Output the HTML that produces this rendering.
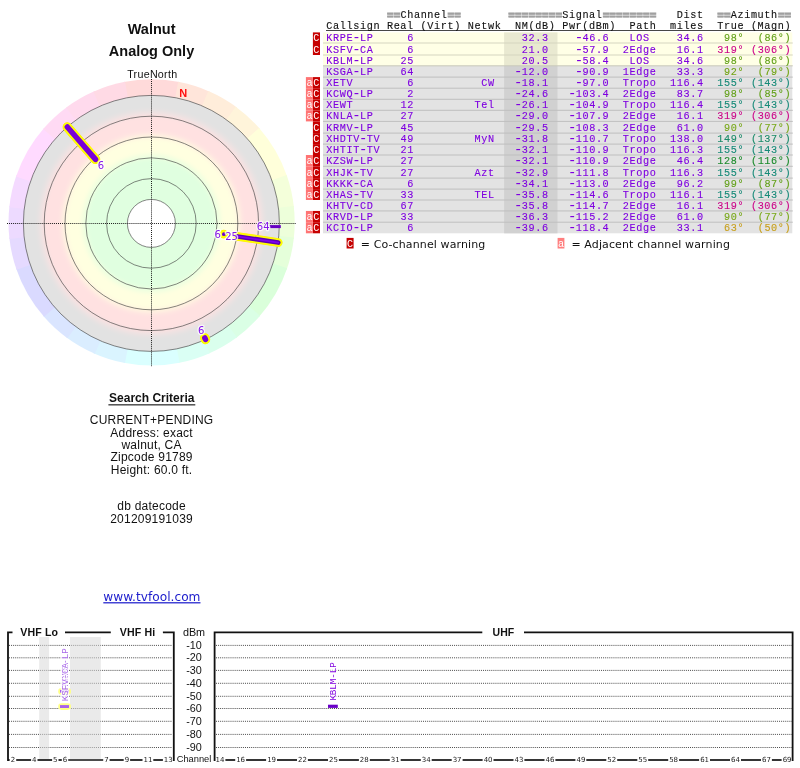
<!DOCTYPE html>
<html lang="en"><head><meta charset="utf-8"><title>TV Fool Radar Plot - Walnut - Analog Only</title>
<style>html,body{margin:0;padding:0;background:#fff}body{width:800px;height:768px;overflow:hidden}svg{display:block;will-change:transform}text{white-space:pre}.m{font-family:"Liberation Mono", "DejaVu Sans Mono", monospace;font-size:10.2px;letter-spacing:0.62px}.s{font-family:"Liberation Sans", "DejaVu Sans", sans-serif}.v{font-family:"DejaVu Sans", "Liberation Sans", sans-serif}</style></head><body>
<svg width="800" height="768" viewBox="0 0 800 768">
<rect width="800" height="768" fill="#fff"/>
<g id="huering">
<path d="M151.60 222.40 L123.56 82.07 A143.10 143.10 0 0 1 179.64 82.07 Z" fill="#ffdada"/>
<path d="M151.60 222.40 L178.17 81.79 A143.10 143.10 0 0 1 209.74 91.64 Z" fill="#ffe5da"/>
<path d="M151.60 222.40 L208.36 91.04 A143.10 143.10 0 0 1 236.98 107.56 Z" fill="#ffedda"/>
<path d="M151.60 222.40 L235.77 106.67 A143.10 143.10 0 0 1 260.09 129.08 Z" fill="#fff4da"/>
<path d="M151.60 222.40 L259.11 127.95 A143.10 143.10 0 0 1 287.15 176.52 Z" fill="#ffffda"/>
<path d="M151.60 222.40 L286.66 175.10 A143.10 143.10 0 0 1 293.91 207.37 Z" fill="#f4ffda"/>
<path d="M151.60 222.40 L293.74 205.88 A143.10 143.10 0 0 1 293.74 238.92 Z" fill="#edffda"/>
<path d="M151.60 222.40 L293.91 237.43 A143.10 143.10 0 0 1 286.66 269.70 Z" fill="#e5ffda"/>
<path d="M151.60 222.40 L287.15 268.28 A143.10 143.10 0 0 1 259.11 316.85 Z" fill="#daffda"/>
<path d="M151.60 222.40 L260.09 315.72 A143.10 143.10 0 0 1 235.77 338.13 Z" fill="#daffe5"/>
<path d="M151.60 222.40 L236.98 337.24 A143.10 143.10 0 0 1 208.36 353.76 Z" fill="#daffed"/>
<path d="M151.60 222.40 L209.74 353.16 A143.10 143.10 0 0 1 178.17 363.01 Z" fill="#dafff4"/>
<path d="M151.60 222.40 L179.64 362.73 A143.10 143.10 0 0 1 123.56 362.73 Z" fill="#daffff"/>
<path d="M151.60 222.40 L125.03 363.01 A143.10 143.10 0 0 1 93.46 353.16 Z" fill="#daf4ff"/>
<path d="M151.60 222.40 L94.84 353.76 A143.10 143.10 0 0 1 66.22 337.24 Z" fill="#daedff"/>
<path d="M151.60 222.40 L67.43 338.13 A143.10 143.10 0 0 1 43.11 315.72 Z" fill="#dae5ff"/>
<path d="M151.60 222.40 L44.09 316.85 A143.10 143.10 0 0 1 16.05 268.28 Z" fill="#dadaff"/>
<path d="M151.60 222.40 L16.54 269.70 A143.10 143.10 0 0 1 9.29 237.43 Z" fill="#e5daff"/>
<path d="M151.60 222.40 L9.46 238.92 A143.10 143.10 0 0 1 9.46 205.88 Z" fill="#eddaff"/>
<path d="M151.60 222.40 L9.29 207.37 A143.10 143.10 0 0 1 16.54 175.10 Z" fill="#f4daff"/>
<path d="M151.60 222.40 L16.05 176.52 A143.10 143.10 0 0 1 44.09 127.95 Z" fill="#ffdaff"/>
<path d="M151.60 222.40 L43.11 129.08 A143.10 143.10 0 0 1 67.43 106.67 Z" fill="#ffdaf4"/>
<path d="M151.60 222.40 L66.22 107.56 A143.10 143.10 0 0 1 94.84 91.04 Z" fill="#ffdaed"/>
<path d="M151.60 222.40 L93.46 91.64 A143.10 143.10 0 0 1 125.03 81.79 Z" fill="#ffdae5"/>
</g>
<defs><radialGradient id="zones" gradientUnits="userSpaceOnUse" cx="151.4" cy="223.4" r="128.0">
<stop offset="0.0000" stop-color="#ffffff"/>
<stop offset="0.1875" stop-color="#ffffff"/>
<stop offset="0.1876" stop-color="#e0ffe0"/>
<stop offset="0.4695" stop-color="#e0ffe0"/>
<stop offset="0.4805" stop-color="#e1ffe0"/>
<stop offset="0.4914" stop-color="#e3ffe0"/>
<stop offset="0.5023" stop-color="#e7ffe0"/>
<stop offset="0.5133" stop-color="#ebffe0"/>
<stop offset="0.5242" stop-color="#f0ffe0"/>
<stop offset="0.5352" stop-color="#f4ffe0"/>
<stop offset="0.5461" stop-color="#f8ffe0"/>
<stop offset="0.5570" stop-color="#fcffe0"/>
<stop offset="0.5680" stop-color="#feffe0"/>
<stop offset="0.5789" stop-color="#ffffe0"/>
<stop offset="0.6320" stop-color="#ffffe0"/>
<stop offset="0.6430" stop-color="#fffee0"/>
<stop offset="0.6539" stop-color="#fffce0"/>
<stop offset="0.6648" stop-color="#fff9e0"/>
<stop offset="0.6758" stop-color="#fff4e0"/>
<stop offset="0.6867" stop-color="#fff0e0"/>
<stop offset="0.6977" stop-color="#ffece1"/>
<stop offset="0.7086" stop-color="#ffe7e1"/>
<stop offset="0.7195" stop-color="#ffe4e1"/>
<stop offset="0.7305" stop-color="#ffe2e1"/>
<stop offset="0.7414" stop-color="#ffe1e1"/>
<stop offset="0.8063" stop-color="#ffe1e1"/>
<stop offset="0.8172" stop-color="#fee1e1"/>
<stop offset="0.8281" stop-color="#fce1e1"/>
<stop offset="0.8391" stop-color="#f9e1e1"/>
<stop offset="0.8500" stop-color="#f5e1e1"/>
<stop offset="0.8609" stop-color="#f0e2e2"/>
<stop offset="0.8719" stop-color="#ece2e2"/>
<stop offset="0.8828" stop-color="#e8e2e2"/>
<stop offset="0.8938" stop-color="#e5e2e2"/>
<stop offset="0.9047" stop-color="#e3e2e2"/>
<stop offset="0.9156" stop-color="#e2e2e2"/>
<stop offset="1.0000" stop-color="#e2e2e2"/>
</radialGradient></defs>
<circle cx="151.4" cy="223.4" r="128.0" fill="url(#zones)"/>
<circle cx="151.4" cy="223.4" r="128.0" fill="none" stroke="#3a3a3a" stroke-width="0.62"/>
<circle cx="151.4" cy="223.4" r="107.2" fill="none" stroke="#3a3a3a" stroke-width="0.62"/>
<circle cx="151.4" cy="223.4" r="86.4" fill="none" stroke="#3a3a3a" stroke-width="0.62"/>
<circle cx="151.4" cy="223.4" r="65.6" fill="none" stroke="#3a3a3a" stroke-width="0.62"/>
<circle cx="151.4" cy="223.4" r="44.8" fill="none" stroke="#3a3a3a" stroke-width="0.62"/>
<circle cx="151.4" cy="223.4" r="24.0" fill="none" stroke="#3a3a3a" stroke-width="0.62"/>
<path d="M7 223.5 H296" stroke="#1a1a1a" stroke-width="1" stroke-dasharray="1 1.04" fill="none"/>
<path d="M151.5 79 V366.8" stroke="#1a1a1a" stroke-width="1" stroke-dasharray="1 1.04" fill="none"/>
<text class="s" x="183.3" y="96.6" font-size="11" font-weight="bold" fill="#ff1010" text-anchor="middle">N</text>
<circle cx="223.75" cy="234.1" r="4.3" fill="#ffee00"/><circle cx="223.75" cy="234.1" r="3.9" fill="#ffff00"/>
<circle cx="223.9" cy="234.2" r="1.9" fill="#6a00cc"/>
<path d="M204.82 337.96 L205.50 339.41" stroke="#ffee00" stroke-width="9.5" stroke-linecap="round"/><path d="M204.82 337.96 L205.50 339.41" stroke="#ffff00" stroke-width="8.7" stroke-linecap="round"/><path d="M204.82 337.96 L205.50 339.41" stroke="#7800d8" stroke-width="5.5" stroke-linecap="round"/>
<path d="M95.52 159.35 L67.32 127.02" stroke="#ffee00" stroke-width="9.5" stroke-linecap="round"/><path d="M95.52 159.35 L67.32 127.02" stroke="#ffff00" stroke-width="8.7" stroke-linecap="round"/><path d="M95.52 159.35 L67.32 127.02" stroke="#7800d8" stroke-width="5.5" stroke-linecap="round"/>
<rect x="269.8" y="225.1" width="11" height="3" fill="#6600c4"/>
<text class="v" x="217.8" y="237.6" font-size="10" text-anchor="middle" fill="#8618ea" stroke="#fff" stroke-opacity="0.75" stroke-width="2.6" stroke-linejoin="round" paint-order="stroke">6</text>
<path d="M237.42 236.41 L278.26 242.59" stroke="#ffee00" stroke-width="8.6" stroke-linecap="round"/><path d="M237.42 236.41 L278.26 242.59" stroke="#ffff00" stroke-width="7.8" stroke-linecap="round"/><path d="M237.42 236.41 L278.26 242.59" stroke="#5a00b0" stroke-width="4.6" stroke-linecap="round"/><path d="M237.42 236.41 L278.26 242.59" stroke="#8000f0" stroke-width="1.6" stroke-linecap="round"/>
<text class="v" x="231.5" y="239.6" font-size="10" text-anchor="middle" fill="#8618ea" stroke="#fff" stroke-opacity="0.75" stroke-width="2.6" stroke-linejoin="round" paint-order="stroke">25</text>
<text class="v" x="263.2" y="230.2" font-size="10" text-anchor="middle" fill="#8618ea" stroke="#fff" stroke-opacity="0.75" stroke-width="2.6" stroke-linejoin="round" paint-order="stroke">64</text>
<text class="v" x="101.0" y="168.6" font-size="10" text-anchor="middle" fill="#8618ea" stroke="#fff" stroke-opacity="0.75" stroke-width="2.6" stroke-linejoin="round" paint-order="stroke">6</text>
<text class="v" x="201.1" y="334.2" font-size="10" text-anchor="middle" fill="#8618ea" stroke="#fff" stroke-opacity="0.75" stroke-width="2.6" stroke-linejoin="round" paint-order="stroke">6</text>
<text class="s" x="151.6" y="34" font-size="14.5" font-weight="bold" text-anchor="middle" fill="#111">Walnut</text>
<text class="s" x="151.5" y="56.0" font-size="14.5" font-weight="bold" text-anchor="middle" fill="#111">Analog Only</text>
<text class="s" x="152.3" y="77.5" font-size="10.7" letter-spacing="0.27" text-anchor="middle" fill="#111">TrueNorth</text>
<text class="s" x="151.8" y="401.9" font-size="12" font-weight="bold" text-anchor="middle" fill="#111">Search Criteria</text>
<rect x="108.4" y="404.3" width="86.9" height="1.1" fill="#111"/>
<text class="s" x="151.6" y="423.7" font-size="12" letter-spacing="0.22" text-anchor="middle" fill="#111">CURRENT+PENDING</text>
<text class="s" x="151.6" y="437.2" font-size="12" letter-spacing="0.22" text-anchor="middle" fill="#111">Address: exact</text>
<text class="s" x="151.6" y="449.4" font-size="12" letter-spacing="0.22" text-anchor="middle" fill="#111">walnut, CA</text>
<text class="s" x="151.6" y="461.3" font-size="12" letter-spacing="0.22" text-anchor="middle" fill="#111">Zipcode 91789</text>
<text class="s" x="151.6" y="473.7" font-size="12" letter-spacing="0.22" text-anchor="middle" fill="#111">Height: 60.0 ft.</text>
<text class="s" x="151.6" y="509.7" font-size="12" letter-spacing="0.22" text-anchor="middle" fill="#111">db datecode</text>
<text class="s" x="151.6" y="523.0" font-size="12" letter-spacing="0.22" text-anchor="middle" fill="#111">201209191039</text>
<text class="v" x="151.9" y="601.2" font-size="12.2" text-anchor="middle" fill="#1c1ccc" text-decoration="underline">www.tvfool.com</text>
<rect x="323.0" y="32.40" width="469.3" height="33.40" fill="#ffffe6"/>
<rect x="323.0" y="65.80" width="469.3" height="167.50" fill="#e3e3e3"/>
<rect x="504.1" y="32.40" width="53.4" height="33.40" fill="#e9e9d1"/>
<rect x="504.1" y="65.80" width="53.4" height="167.50" fill="#d1d1d1"/>
<rect x="323.0" y="42.50" width="469.8" height="1" fill="#d6d6c0"/>
<rect x="323.0" y="54.50" width="469.8" height="1" fill="#d6d6c0"/>
<rect x="323.0" y="65.30" width="469.8" height="1" fill="#c8c8b8"/>
<rect x="323.0" y="76.60" width="469.8" height="1" fill="#bfbfbf"/>
<rect x="323.0" y="87.70" width="469.8" height="1" fill="#bfbfbf"/>
<rect x="323.0" y="98.80" width="469.8" height="1" fill="#bfbfbf"/>
<rect x="323.0" y="109.80" width="469.8" height="1" fill="#bfbfbf"/>
<rect x="323.0" y="120.90" width="469.8" height="1" fill="#bfbfbf"/>
<rect x="323.0" y="132.60" width="469.8" height="1" fill="#bfbfbf"/>
<rect x="323.0" y="143.60" width="469.8" height="1" fill="#bfbfbf"/>
<rect x="323.0" y="154.50" width="469.8" height="1" fill="#bfbfbf"/>
<rect x="323.0" y="165.80" width="469.8" height="1" fill="#bfbfbf"/>
<rect x="323.0" y="177.60" width="469.8" height="1" fill="#bfbfbf"/>
<rect x="323.0" y="188.60" width="469.8" height="1" fill="#bfbfbf"/>
<rect x="323.0" y="199.50" width="469.8" height="1" fill="#bfbfbf"/>
<rect x="323.0" y="210.45" width="469.8" height="1" fill="#bfbfbf"/>
<rect x="323.0" y="221.70" width="469.8" height="1" fill="#bfbfbf"/>
<rect x="326" y="30.1" width="464.8" height="0.9" fill="#333"/>
<text class="m" x="386.96" y="19.00" fill="#a0a0a0" stroke="#a0a0a0" stroke-width="0.85" font-weight="bold" style="font-size:11px;letter-spacing:0.14px">==</text>
<text class="m" x="400.44" y="17.50" fill="#111" stroke="#111" stroke-width="0.12">Channel</text>
<text class="m" x="447.62" y="19.00" fill="#a0a0a0" stroke="#a0a0a0" stroke-width="0.85" font-weight="bold" style="font-size:11px;letter-spacing:0.14px">==</text>
<text class="m" x="508.28" y="19.00" fill="#a0a0a0" stroke="#a0a0a0" stroke-width="0.85" font-weight="bold" style="font-size:11px;letter-spacing:0.14px">========</text>
<text class="m" x="562.20" y="17.50" fill="#111" stroke="#111" stroke-width="0.12">Signal</text>
<text class="m" x="602.64" y="19.00" fill="#a0a0a0" stroke="#a0a0a0" stroke-width="0.85" font-weight="bold" style="font-size:11px;letter-spacing:0.14px">========</text>
<text class="m" x="676.78" y="17.50" fill="#111" stroke="#111" stroke-width="0.12">Dist</text>
<text class="m" x="717.22" y="19.00" fill="#a0a0a0" stroke="#a0a0a0" stroke-width="0.85" font-weight="bold" style="font-size:11px;letter-spacing:0.14px">==</text>
<text class="m" x="730.70" y="17.50" fill="#111" stroke="#111" stroke-width="0.12">Azimuth</text>
<text class="m" x="777.88" y="19.00" fill="#a0a0a0" stroke="#a0a0a0" stroke-width="0.85" font-weight="bold" style="font-size:11px;letter-spacing:0.14px">==</text>
<text class="m" x="326.30" y="29.00" fill="#111" stroke="#111" stroke-width="0.12">Callsign Real (Virt)</text>
<text class="m" x="467.84" y="29.00" fill="#111" stroke="#111" stroke-width="0.12">Netwk</text>
<text class="m" x="515.02" y="29.00" fill="#111" stroke="#111" stroke-width="0.12">NM(dB) Pwr(dBm)</text>
<text class="m" x="629.60" y="29.00" fill="#111" stroke="#111" stroke-width="0.12">Path</text>
<text class="m" x="670.04" y="29.00" fill="#111" stroke="#111" stroke-width="0.12">miles</text>
<text class="m" x="717.22" y="29.00" fill="#111" stroke="#111" stroke-width="0.12">True (Magn)</text>
<rect x="312.9" y="32.40" width="7.1" height="10.60" fill="#c60000"/>
<text class="m" x="313.3" y="40.80" fill="#fff" style="letter-spacing:0">C</text>
<text class="m" x="326.30" y="40.80" fill="#7f00e0" stroke="#7f00e0" stroke-width="0.12">KRPE<tspan dx="-0.95" dy="1.05" style="font-size:14px;letter-spacing:-1.66px" stroke-width="0">-</tspan><tspan dx="0.95" dy="-1.05">LP</tspan></text>
<text class="m" x="407.18" y="40.80" fill="#7f00e0" stroke="#7f00e0" stroke-width="0.12">6</text>
<text class="m" x="521.76" y="40.80" fill="#7f00e0" stroke="#7f00e0" stroke-width="0.12">32.3</text>
<text class="m" x="575.68" y="40.80" fill="#7f00e0" stroke="#7f00e0" stroke-width="0.12"><tspan dx="-0.95" dy="1.05" style="font-size:14px;letter-spacing:-1.66px" stroke-width="0">-</tspan><tspan dx="0.95" dy="-1.05">46.6</tspan></text>
<text class="m" x="629.60" y="40.80" fill="#7f00e0" stroke="#7f00e0" stroke-width="0.12">LOS</text>
<text class="m" x="676.78" y="40.80" fill="#7f00e0" stroke="#7f00e0" stroke-width="0.12">34.6</text>
<text class="m" x="723.96" y="40.80" fill="#62a018" stroke="#62a018" stroke-width="0.12">98°</text>
<text class="m" x="757.66" y="40.80" fill="#62a018" stroke="#62a018" stroke-width="0.12">(86°)</text>
<rect x="312.9" y="43.00" width="7.1" height="12.00" fill="#c60000"/>
<text class="m" x="313.3" y="52.80" fill="#fff" style="letter-spacing:0">C</text>
<text class="m" x="326.30" y="52.80" fill="#7f00e0" stroke="#7f00e0" stroke-width="0.12">KSFV<tspan dx="-0.95" dy="1.05" style="font-size:14px;letter-spacing:-1.66px" stroke-width="0">-</tspan><tspan dx="0.95" dy="-1.05">CA</tspan></text>
<text class="m" x="407.18" y="52.80" fill="#7f00e0" stroke="#7f00e0" stroke-width="0.12">6</text>
<text class="m" x="521.76" y="52.80" fill="#7f00e0" stroke="#7f00e0" stroke-width="0.12">21.0</text>
<text class="m" x="575.68" y="52.80" fill="#7f00e0" stroke="#7f00e0" stroke-width="0.12"><tspan dx="-0.95" dy="1.05" style="font-size:14px;letter-spacing:-1.66px" stroke-width="0">-</tspan><tspan dx="0.95" dy="-1.05">57.9</tspan></text>
<text class="m" x="622.86" y="52.80" fill="#7f00e0" stroke="#7f00e0" stroke-width="0.12">2Edge</text>
<text class="m" x="676.78" y="52.80" fill="#7f00e0" stroke="#7f00e0" stroke-width="0.12">16.1</text>
<text class="m" x="717.22" y="52.80" fill="#cc0088" stroke="#cc0088" stroke-width="0.12">319°</text>
<text class="m" x="750.92" y="52.80" fill="#cc0088" stroke="#cc0088" stroke-width="0.12">(306°)</text>
<text class="m" x="326.30" y="63.60" fill="#7f00e0" stroke="#7f00e0" stroke-width="0.12">KBLM<tspan dx="-0.95" dy="1.05" style="font-size:14px;letter-spacing:-1.66px" stroke-width="0">-</tspan><tspan dx="0.95" dy="-1.05">LP</tspan></text>
<text class="m" x="400.44" y="63.60" fill="#7f00e0" stroke="#7f00e0" stroke-width="0.12">25</text>
<text class="m" x="521.76" y="63.60" fill="#7f00e0" stroke="#7f00e0" stroke-width="0.12">20.5</text>
<text class="m" x="575.68" y="63.60" fill="#7f00e0" stroke="#7f00e0" stroke-width="0.12"><tspan dx="-0.95" dy="1.05" style="font-size:14px;letter-spacing:-1.66px" stroke-width="0">-</tspan><tspan dx="0.95" dy="-1.05">58.4</tspan></text>
<text class="m" x="629.60" y="63.60" fill="#7f00e0" stroke="#7f00e0" stroke-width="0.12">LOS</text>
<text class="m" x="676.78" y="63.60" fill="#7f00e0" stroke="#7f00e0" stroke-width="0.12">34.6</text>
<text class="m" x="723.96" y="63.60" fill="#62a018" stroke="#62a018" stroke-width="0.12">98°</text>
<text class="m" x="757.66" y="63.60" fill="#62a018" stroke="#62a018" stroke-width="0.12">(86°)</text>
<text class="m" x="326.30" y="74.90" fill="#7f00e0" stroke="#7f00e0" stroke-width="0.12">KSGA<tspan dx="-0.95" dy="1.05" style="font-size:14px;letter-spacing:-1.66px" stroke-width="0">-</tspan><tspan dx="0.95" dy="-1.05">LP</tspan></text>
<text class="m" x="400.44" y="74.90" fill="#7f00e0" stroke="#7f00e0" stroke-width="0.12">64</text>
<text class="m" x="515.02" y="74.90" fill="#7f00e0" stroke="#7f00e0" stroke-width="0.12"><tspan dx="-0.95" dy="1.05" style="font-size:14px;letter-spacing:-1.66px" stroke-width="0">-</tspan><tspan dx="0.95" dy="-1.05">12.0</tspan></text>
<text class="m" x="575.68" y="74.90" fill="#7f00e0" stroke="#7f00e0" stroke-width="0.12"><tspan dx="-0.95" dy="1.05" style="font-size:14px;letter-spacing:-1.66px" stroke-width="0">-</tspan><tspan dx="0.95" dy="-1.05">90.9</tspan></text>
<text class="m" x="622.86" y="74.90" fill="#7f00e0" stroke="#7f00e0" stroke-width="0.12">1Edge</text>
<text class="m" x="676.78" y="74.90" fill="#7f00e0" stroke="#7f00e0" stroke-width="0.12">33.3</text>
<text class="m" x="723.96" y="74.90" fill="#72a414" stroke="#72a414" stroke-width="0.12">92°</text>
<text class="m" x="757.66" y="74.90" fill="#72a414" stroke="#72a414" stroke-width="0.12">(79°)</text>
<rect x="312.9" y="77.10" width="7.1" height="11.10" fill="#c60000"/>
<text class="m" x="313.3" y="86.00" fill="#fff" style="letter-spacing:0">C</text>
<rect x="305.9" y="77.10" width="7" height="11.10" fill="#ff7474"/>
<text class="m" x="306.6" y="86.00" fill="#fff" style="letter-spacing:0">a</text>
<text class="m" x="326.30" y="86.00" fill="#7f00e0" stroke="#7f00e0" stroke-width="0.12">XETV</text>
<text class="m" x="407.18" y="86.00" fill="#7f00e0" stroke="#7f00e0" stroke-width="0.12">6</text>
<text class="m" x="481.32" y="86.00" fill="#7f00e0" stroke="#7f00e0" stroke-width="0.12">CW</text>
<text class="m" x="515.02" y="86.00" fill="#7f00e0" stroke="#7f00e0" stroke-width="0.12"><tspan dx="-0.95" dy="1.05" style="font-size:14px;letter-spacing:-1.66px" stroke-width="0">-</tspan><tspan dx="0.95" dy="-1.05">18.1</tspan></text>
<text class="m" x="575.68" y="86.00" fill="#7f00e0" stroke="#7f00e0" stroke-width="0.12"><tspan dx="-0.95" dy="1.05" style="font-size:14px;letter-spacing:-1.66px" stroke-width="0">-</tspan><tspan dx="0.95" dy="-1.05">97.0</tspan></text>
<text class="m" x="622.86" y="86.00" fill="#7f00e0" stroke="#7f00e0" stroke-width="0.12">Tropo</text>
<text class="m" x="670.04" y="86.00" fill="#7f00e0" stroke="#7f00e0" stroke-width="0.12">116.4</text>
<text class="m" x="717.22" y="86.00" fill="#168a78" stroke="#168a78" stroke-width="0.12">155°</text>
<text class="m" x="750.92" y="86.00" fill="#168a78" stroke="#168a78" stroke-width="0.12">(143°)</text>
<rect x="312.9" y="88.20" width="7.1" height="11.10" fill="#c60000"/>
<text class="m" x="313.3" y="97.10" fill="#fff" style="letter-spacing:0">C</text>
<rect x="305.9" y="88.20" width="7" height="11.10" fill="#ff7474"/>
<text class="m" x="306.6" y="97.10" fill="#fff" style="letter-spacing:0">a</text>
<text class="m" x="326.30" y="97.10" fill="#7f00e0" stroke="#7f00e0" stroke-width="0.12">KCWQ<tspan dx="-0.95" dy="1.05" style="font-size:14px;letter-spacing:-1.66px" stroke-width="0">-</tspan><tspan dx="0.95" dy="-1.05">LP</tspan></text>
<text class="m" x="407.18" y="97.10" fill="#7f00e0" stroke="#7f00e0" stroke-width="0.12">2</text>
<text class="m" x="515.02" y="97.10" fill="#7f00e0" stroke="#7f00e0" stroke-width="0.12"><tspan dx="-0.95" dy="1.05" style="font-size:14px;letter-spacing:-1.66px" stroke-width="0">-</tspan><tspan dx="0.95" dy="-1.05">24.6</tspan></text>
<text class="m" x="568.94" y="97.10" fill="#7f00e0" stroke="#7f00e0" stroke-width="0.12"><tspan dx="-0.95" dy="1.05" style="font-size:14px;letter-spacing:-1.66px" stroke-width="0">-</tspan><tspan dx="0.95" dy="-1.05">103.4</tspan></text>
<text class="m" x="622.86" y="97.10" fill="#7f00e0" stroke="#7f00e0" stroke-width="0.12">2Edge</text>
<text class="m" x="676.78" y="97.10" fill="#7f00e0" stroke="#7f00e0" stroke-width="0.12">83.7</text>
<text class="m" x="723.96" y="97.10" fill="#62a018" stroke="#62a018" stroke-width="0.12">98°</text>
<text class="m" x="757.66" y="97.10" fill="#62a018" stroke="#62a018" stroke-width="0.12">(85°)</text>
<rect x="312.9" y="99.30" width="7.1" height="11.00" fill="#c60000"/>
<text class="m" x="313.3" y="108.10" fill="#fff" style="letter-spacing:0">C</text>
<rect x="305.9" y="99.30" width="7" height="11.00" fill="#ff7474"/>
<text class="m" x="306.6" y="108.10" fill="#fff" style="letter-spacing:0">a</text>
<text class="m" x="326.30" y="108.10" fill="#7f00e0" stroke="#7f00e0" stroke-width="0.12">XEWT</text>
<text class="m" x="400.44" y="108.10" fill="#7f00e0" stroke="#7f00e0" stroke-width="0.12">12</text>
<text class="m" x="474.58" y="108.10" fill="#7f00e0" stroke="#7f00e0" stroke-width="0.12">Tel</text>
<text class="m" x="515.02" y="108.10" fill="#7f00e0" stroke="#7f00e0" stroke-width="0.12"><tspan dx="-0.95" dy="1.05" style="font-size:14px;letter-spacing:-1.66px" stroke-width="0">-</tspan><tspan dx="0.95" dy="-1.05">26.1</tspan></text>
<text class="m" x="568.94" y="108.10" fill="#7f00e0" stroke="#7f00e0" stroke-width="0.12"><tspan dx="-0.95" dy="1.05" style="font-size:14px;letter-spacing:-1.66px" stroke-width="0">-</tspan><tspan dx="0.95" dy="-1.05">104.9</tspan></text>
<text class="m" x="622.86" y="108.10" fill="#7f00e0" stroke="#7f00e0" stroke-width="0.12">Tropo</text>
<text class="m" x="670.04" y="108.10" fill="#7f00e0" stroke="#7f00e0" stroke-width="0.12">116.4</text>
<text class="m" x="717.22" y="108.10" fill="#168a78" stroke="#168a78" stroke-width="0.12">155°</text>
<text class="m" x="750.92" y="108.10" fill="#168a78" stroke="#168a78" stroke-width="0.12">(143°)</text>
<rect x="312.9" y="110.30" width="7.1" height="11.10" fill="#c60000"/>
<text class="m" x="313.3" y="119.20" fill="#fff" style="letter-spacing:0">C</text>
<rect x="305.9" y="110.30" width="7" height="11.10" fill="#ff7474"/>
<text class="m" x="306.6" y="119.20" fill="#fff" style="letter-spacing:0">a</text>
<text class="m" x="326.30" y="119.20" fill="#7f00e0" stroke="#7f00e0" stroke-width="0.12">KNLA<tspan dx="-0.95" dy="1.05" style="font-size:14px;letter-spacing:-1.66px" stroke-width="0">-</tspan><tspan dx="0.95" dy="-1.05">LP</tspan></text>
<text class="m" x="400.44" y="119.20" fill="#7f00e0" stroke="#7f00e0" stroke-width="0.12">27</text>
<text class="m" x="515.02" y="119.20" fill="#7f00e0" stroke="#7f00e0" stroke-width="0.12"><tspan dx="-0.95" dy="1.05" style="font-size:14px;letter-spacing:-1.66px" stroke-width="0">-</tspan><tspan dx="0.95" dy="-1.05">29.0</tspan></text>
<text class="m" x="568.94" y="119.20" fill="#7f00e0" stroke="#7f00e0" stroke-width="0.12"><tspan dx="-0.95" dy="1.05" style="font-size:14px;letter-spacing:-1.66px" stroke-width="0">-</tspan><tspan dx="0.95" dy="-1.05">107.9</tspan></text>
<text class="m" x="622.86" y="119.20" fill="#7f00e0" stroke="#7f00e0" stroke-width="0.12">2Edge</text>
<text class="m" x="676.78" y="119.20" fill="#7f00e0" stroke="#7f00e0" stroke-width="0.12">16.1</text>
<text class="m" x="717.22" y="119.20" fill="#cc0088" stroke="#cc0088" stroke-width="0.12">319°</text>
<text class="m" x="750.92" y="119.20" fill="#cc0088" stroke="#cc0088" stroke-width="0.12">(306°)</text>
<rect x="312.9" y="121.40" width="7.1" height="11.70" fill="#c60000"/>
<text class="m" x="313.3" y="130.90" fill="#fff" style="letter-spacing:0">C</text>
<text class="m" x="326.30" y="130.90" fill="#7f00e0" stroke="#7f00e0" stroke-width="0.12">KRMV<tspan dx="-0.95" dy="1.05" style="font-size:14px;letter-spacing:-1.66px" stroke-width="0">-</tspan><tspan dx="0.95" dy="-1.05">LP</tspan></text>
<text class="m" x="400.44" y="130.90" fill="#7f00e0" stroke="#7f00e0" stroke-width="0.12">45</text>
<text class="m" x="515.02" y="130.90" fill="#7f00e0" stroke="#7f00e0" stroke-width="0.12"><tspan dx="-0.95" dy="1.05" style="font-size:14px;letter-spacing:-1.66px" stroke-width="0">-</tspan><tspan dx="0.95" dy="-1.05">29.5</tspan></text>
<text class="m" x="568.94" y="130.90" fill="#7f00e0" stroke="#7f00e0" stroke-width="0.12"><tspan dx="-0.95" dy="1.05" style="font-size:14px;letter-spacing:-1.66px" stroke-width="0">-</tspan><tspan dx="0.95" dy="-1.05">108.3</tspan></text>
<text class="m" x="622.86" y="130.90" fill="#7f00e0" stroke="#7f00e0" stroke-width="0.12">2Edge</text>
<text class="m" x="676.78" y="130.90" fill="#7f00e0" stroke="#7f00e0" stroke-width="0.12">61.0</text>
<text class="m" x="723.96" y="130.90" fill="#78a818" stroke="#78a818" stroke-width="0.12">90°</text>
<text class="m" x="757.66" y="130.90" fill="#78a818" stroke="#78a818" stroke-width="0.12">(77°)</text>
<rect x="312.9" y="133.10" width="7.1" height="11.00" fill="#c60000"/>
<text class="m" x="313.3" y="141.90" fill="#fff" style="letter-spacing:0">C</text>
<text class="m" x="326.30" y="141.90" fill="#7f00e0" stroke="#7f00e0" stroke-width="0.12">XHDTV<tspan dx="-0.95" dy="1.05" style="font-size:14px;letter-spacing:-1.66px" stroke-width="0">-</tspan><tspan dx="0.95" dy="-1.05">TV</tspan></text>
<text class="m" x="400.44" y="141.90" fill="#7f00e0" stroke="#7f00e0" stroke-width="0.12">49</text>
<text class="m" x="474.58" y="141.90" fill="#7f00e0" stroke="#7f00e0" stroke-width="0.12">MyN</text>
<text class="m" x="515.02" y="141.90" fill="#7f00e0" stroke="#7f00e0" stroke-width="0.12"><tspan dx="-0.95" dy="1.05" style="font-size:14px;letter-spacing:-1.66px" stroke-width="0">-</tspan><tspan dx="0.95" dy="-1.05">31.8</tspan></text>
<text class="m" x="568.94" y="141.90" fill="#7f00e0" stroke="#7f00e0" stroke-width="0.12"><tspan dx="-0.95" dy="1.05" style="font-size:14px;letter-spacing:-1.66px" stroke-width="0">-</tspan><tspan dx="0.95" dy="-1.05">110.7</tspan></text>
<text class="m" x="622.86" y="141.90" fill="#7f00e0" stroke="#7f00e0" stroke-width="0.12">Tropo</text>
<text class="m" x="670.04" y="141.90" fill="#7f00e0" stroke="#7f00e0" stroke-width="0.12">138.0</text>
<text class="m" x="717.22" y="141.90" fill="#188a68" stroke="#188a68" stroke-width="0.12">149°</text>
<text class="m" x="750.92" y="141.90" fill="#188a68" stroke="#188a68" stroke-width="0.12">(137°)</text>
<rect x="312.9" y="144.10" width="7.1" height="10.90" fill="#c60000"/>
<text class="m" x="313.3" y="152.80" fill="#fff" style="letter-spacing:0">C</text>
<text class="m" x="326.30" y="152.80" fill="#7f00e0" stroke="#7f00e0" stroke-width="0.12">XHTIT<tspan dx="-0.95" dy="1.05" style="font-size:14px;letter-spacing:-1.66px" stroke-width="0">-</tspan><tspan dx="0.95" dy="-1.05">TV</tspan></text>
<text class="m" x="400.44" y="152.80" fill="#7f00e0" stroke="#7f00e0" stroke-width="0.12">21</text>
<text class="m" x="515.02" y="152.80" fill="#7f00e0" stroke="#7f00e0" stroke-width="0.12"><tspan dx="-0.95" dy="1.05" style="font-size:14px;letter-spacing:-1.66px" stroke-width="0">-</tspan><tspan dx="0.95" dy="-1.05">32.1</tspan></text>
<text class="m" x="568.94" y="152.80" fill="#7f00e0" stroke="#7f00e0" stroke-width="0.12"><tspan dx="-0.95" dy="1.05" style="font-size:14px;letter-spacing:-1.66px" stroke-width="0">-</tspan><tspan dx="0.95" dy="-1.05">110.9</tspan></text>
<text class="m" x="622.86" y="152.80" fill="#7f00e0" stroke="#7f00e0" stroke-width="0.12">Tropo</text>
<text class="m" x="670.04" y="152.80" fill="#7f00e0" stroke="#7f00e0" stroke-width="0.12">116.3</text>
<text class="m" x="717.22" y="152.80" fill="#168a78" stroke="#168a78" stroke-width="0.12">155°</text>
<text class="m" x="750.92" y="152.80" fill="#168a78" stroke="#168a78" stroke-width="0.12">(143°)</text>
<rect x="312.9" y="155.00" width="7.1" height="11.30" fill="#c60000"/>
<text class="m" x="313.3" y="164.10" fill="#fff" style="letter-spacing:0">C</text>
<rect x="305.9" y="155.00" width="7" height="11.30" fill="#ff7474"/>
<text class="m" x="306.6" y="164.10" fill="#fff" style="letter-spacing:0">a</text>
<text class="m" x="326.30" y="164.10" fill="#7f00e0" stroke="#7f00e0" stroke-width="0.12">KZSW<tspan dx="-0.95" dy="1.05" style="font-size:14px;letter-spacing:-1.66px" stroke-width="0">-</tspan><tspan dx="0.95" dy="-1.05">LP</tspan></text>
<text class="m" x="400.44" y="164.10" fill="#7f00e0" stroke="#7f00e0" stroke-width="0.12">27</text>
<text class="m" x="515.02" y="164.10" fill="#7f00e0" stroke="#7f00e0" stroke-width="0.12"><tspan dx="-0.95" dy="1.05" style="font-size:14px;letter-spacing:-1.66px" stroke-width="0">-</tspan><tspan dx="0.95" dy="-1.05">32.1</tspan></text>
<text class="m" x="568.94" y="164.10" fill="#7f00e0" stroke="#7f00e0" stroke-width="0.12"><tspan dx="-0.95" dy="1.05" style="font-size:14px;letter-spacing:-1.66px" stroke-width="0">-</tspan><tspan dx="0.95" dy="-1.05">110.9</tspan></text>
<text class="m" x="622.86" y="164.10" fill="#7f00e0" stroke="#7f00e0" stroke-width="0.12">2Edge</text>
<text class="m" x="676.78" y="164.10" fill="#7f00e0" stroke="#7f00e0" stroke-width="0.12">46.4</text>
<text class="m" x="717.22" y="164.10" fill="#1a8a2a" stroke="#1a8a2a" stroke-width="0.12">128°</text>
<text class="m" x="750.92" y="164.10" fill="#1a8a2a" stroke="#1a8a2a" stroke-width="0.12">(116°)</text>
<rect x="312.9" y="166.30" width="7.1" height="11.80" fill="#c60000"/>
<text class="m" x="313.3" y="175.90" fill="#fff" style="letter-spacing:0">C</text>
<rect x="305.9" y="166.30" width="7" height="11.80" fill="#ff7474"/>
<text class="m" x="306.6" y="175.90" fill="#fff" style="letter-spacing:0">a</text>
<text class="m" x="326.30" y="175.90" fill="#7f00e0" stroke="#7f00e0" stroke-width="0.12">XHJK<tspan dx="-0.95" dy="1.05" style="font-size:14px;letter-spacing:-1.66px" stroke-width="0">-</tspan><tspan dx="0.95" dy="-1.05">TV</tspan></text>
<text class="m" x="400.44" y="175.90" fill="#7f00e0" stroke="#7f00e0" stroke-width="0.12">27</text>
<text class="m" x="474.58" y="175.90" fill="#7f00e0" stroke="#7f00e0" stroke-width="0.12">Azt</text>
<text class="m" x="515.02" y="175.90" fill="#7f00e0" stroke="#7f00e0" stroke-width="0.12"><tspan dx="-0.95" dy="1.05" style="font-size:14px;letter-spacing:-1.66px" stroke-width="0">-</tspan><tspan dx="0.95" dy="-1.05">32.9</tspan></text>
<text class="m" x="568.94" y="175.90" fill="#7f00e0" stroke="#7f00e0" stroke-width="0.12"><tspan dx="-0.95" dy="1.05" style="font-size:14px;letter-spacing:-1.66px" stroke-width="0">-</tspan><tspan dx="0.95" dy="-1.05">111.8</tspan></text>
<text class="m" x="622.86" y="175.90" fill="#7f00e0" stroke="#7f00e0" stroke-width="0.12">Tropo</text>
<text class="m" x="670.04" y="175.90" fill="#7f00e0" stroke="#7f00e0" stroke-width="0.12">116.3</text>
<text class="m" x="717.22" y="175.90" fill="#168a78" stroke="#168a78" stroke-width="0.12">155°</text>
<text class="m" x="750.92" y="175.90" fill="#168a78" stroke="#168a78" stroke-width="0.12">(143°)</text>
<rect x="312.9" y="178.10" width="7.1" height="11.00" fill="#c60000"/>
<text class="m" x="313.3" y="186.90" fill="#fff" style="letter-spacing:0">C</text>
<rect x="305.9" y="178.10" width="7" height="11.00" fill="#ff7474"/>
<text class="m" x="306.6" y="186.90" fill="#fff" style="letter-spacing:0">a</text>
<text class="m" x="326.30" y="186.90" fill="#7f00e0" stroke="#7f00e0" stroke-width="0.12">KKKK<tspan dx="-0.95" dy="1.05" style="font-size:14px;letter-spacing:-1.66px" stroke-width="0">-</tspan><tspan dx="0.95" dy="-1.05">CA</tspan></text>
<text class="m" x="407.18" y="186.90" fill="#7f00e0" stroke="#7f00e0" stroke-width="0.12">6</text>
<text class="m" x="515.02" y="186.90" fill="#7f00e0" stroke="#7f00e0" stroke-width="0.12"><tspan dx="-0.95" dy="1.05" style="font-size:14px;letter-spacing:-1.66px" stroke-width="0">-</tspan><tspan dx="0.95" dy="-1.05">34.1</tspan></text>
<text class="m" x="568.94" y="186.90" fill="#7f00e0" stroke="#7f00e0" stroke-width="0.12"><tspan dx="-0.95" dy="1.05" style="font-size:14px;letter-spacing:-1.66px" stroke-width="0">-</tspan><tspan dx="0.95" dy="-1.05">113.0</tspan></text>
<text class="m" x="622.86" y="186.90" fill="#7f00e0" stroke="#7f00e0" stroke-width="0.12">2Edge</text>
<text class="m" x="676.78" y="186.90" fill="#7f00e0" stroke="#7f00e0" stroke-width="0.12">96.2</text>
<text class="m" x="723.96" y="186.90" fill="#62a018" stroke="#62a018" stroke-width="0.12">99°</text>
<text class="m" x="757.66" y="186.90" fill="#62a018" stroke="#62a018" stroke-width="0.12">(87°)</text>
<rect x="312.9" y="189.10" width="7.1" height="10.90" fill="#c60000"/>
<text class="m" x="313.3" y="197.80" fill="#fff" style="letter-spacing:0">C</text>
<rect x="305.9" y="189.10" width="7" height="10.90" fill="#ff7474"/>
<text class="m" x="306.6" y="197.80" fill="#fff" style="letter-spacing:0">a</text>
<text class="m" x="326.30" y="197.80" fill="#7f00e0" stroke="#7f00e0" stroke-width="0.12">XHAS<tspan dx="-0.95" dy="1.05" style="font-size:14px;letter-spacing:-1.66px" stroke-width="0">-</tspan><tspan dx="0.95" dy="-1.05">TV</tspan></text>
<text class="m" x="400.44" y="197.80" fill="#7f00e0" stroke="#7f00e0" stroke-width="0.12">33</text>
<text class="m" x="474.58" y="197.80" fill="#7f00e0" stroke="#7f00e0" stroke-width="0.12">TEL</text>
<text class="m" x="515.02" y="197.80" fill="#7f00e0" stroke="#7f00e0" stroke-width="0.12"><tspan dx="-0.95" dy="1.05" style="font-size:14px;letter-spacing:-1.66px" stroke-width="0">-</tspan><tspan dx="0.95" dy="-1.05">35.8</tspan></text>
<text class="m" x="568.94" y="197.80" fill="#7f00e0" stroke="#7f00e0" stroke-width="0.12"><tspan dx="-0.95" dy="1.05" style="font-size:14px;letter-spacing:-1.66px" stroke-width="0">-</tspan><tspan dx="0.95" dy="-1.05">114.6</tspan></text>
<text class="m" x="622.86" y="197.80" fill="#7f00e0" stroke="#7f00e0" stroke-width="0.12">Tropo</text>
<text class="m" x="670.04" y="197.80" fill="#7f00e0" stroke="#7f00e0" stroke-width="0.12">116.1</text>
<text class="m" x="717.22" y="197.80" fill="#168a78" stroke="#168a78" stroke-width="0.12">155°</text>
<text class="m" x="750.92" y="197.80" fill="#168a78" stroke="#168a78" stroke-width="0.12">(143°)</text>
<text class="m" x="326.30" y="208.75" fill="#7f00e0" stroke="#7f00e0" stroke-width="0.12">KHTV<tspan dx="-0.95" dy="1.05" style="font-size:14px;letter-spacing:-1.66px" stroke-width="0">-</tspan><tspan dx="0.95" dy="-1.05">CD</tspan></text>
<text class="m" x="400.44" y="208.75" fill="#7f00e0" stroke="#7f00e0" stroke-width="0.12">67</text>
<text class="m" x="515.02" y="208.75" fill="#7f00e0" stroke="#7f00e0" stroke-width="0.12"><tspan dx="-0.95" dy="1.05" style="font-size:14px;letter-spacing:-1.66px" stroke-width="0">-</tspan><tspan dx="0.95" dy="-1.05">35.8</tspan></text>
<text class="m" x="568.94" y="208.75" fill="#7f00e0" stroke="#7f00e0" stroke-width="0.12"><tspan dx="-0.95" dy="1.05" style="font-size:14px;letter-spacing:-1.66px" stroke-width="0">-</tspan><tspan dx="0.95" dy="-1.05">114.7</tspan></text>
<text class="m" x="622.86" y="208.75" fill="#7f00e0" stroke="#7f00e0" stroke-width="0.12">2Edge</text>
<text class="m" x="676.78" y="208.75" fill="#7f00e0" stroke="#7f00e0" stroke-width="0.12">16.1</text>
<text class="m" x="717.22" y="208.75" fill="#cc0088" stroke="#cc0088" stroke-width="0.12">319°</text>
<text class="m" x="750.92" y="208.75" fill="#cc0088" stroke="#cc0088" stroke-width="0.12">(306°)</text>
<rect x="312.9" y="210.95" width="7.1" height="11.25" fill="#c60000"/>
<text class="m" x="313.3" y="220.00" fill="#fff" style="letter-spacing:0">C</text>
<rect x="305.9" y="210.95" width="7" height="11.25" fill="#ff7474"/>
<text class="m" x="306.6" y="220.00" fill="#fff" style="letter-spacing:0">a</text>
<text class="m" x="326.30" y="220.00" fill="#7f00e0" stroke="#7f00e0" stroke-width="0.12">KRVD<tspan dx="-0.95" dy="1.05" style="font-size:14px;letter-spacing:-1.66px" stroke-width="0">-</tspan><tspan dx="0.95" dy="-1.05">LP</tspan></text>
<text class="m" x="400.44" y="220.00" fill="#7f00e0" stroke="#7f00e0" stroke-width="0.12">33</text>
<text class="m" x="515.02" y="220.00" fill="#7f00e0" stroke="#7f00e0" stroke-width="0.12"><tspan dx="-0.95" dy="1.05" style="font-size:14px;letter-spacing:-1.66px" stroke-width="0">-</tspan><tspan dx="0.95" dy="-1.05">36.3</tspan></text>
<text class="m" x="568.94" y="220.00" fill="#7f00e0" stroke="#7f00e0" stroke-width="0.12"><tspan dx="-0.95" dy="1.05" style="font-size:14px;letter-spacing:-1.66px" stroke-width="0">-</tspan><tspan dx="0.95" dy="-1.05">115.2</tspan></text>
<text class="m" x="622.86" y="220.00" fill="#7f00e0" stroke="#7f00e0" stroke-width="0.12">2Edge</text>
<text class="m" x="676.78" y="220.00" fill="#7f00e0" stroke="#7f00e0" stroke-width="0.12">61.0</text>
<text class="m" x="723.96" y="220.00" fill="#78a818" stroke="#78a818" stroke-width="0.12">90°</text>
<text class="m" x="757.66" y="220.00" fill="#78a818" stroke="#78a818" stroke-width="0.12">(77°)</text>
<rect x="312.9" y="222.20" width="7.1" height="11.10" fill="#c60000"/>
<text class="m" x="313.3" y="230.90" fill="#fff" style="letter-spacing:0">C</text>
<rect x="305.9" y="222.20" width="7" height="11.10" fill="#ff7474"/>
<text class="m" x="306.6" y="230.90" fill="#fff" style="letter-spacing:0">a</text>
<text class="m" x="326.30" y="230.90" fill="#7f00e0" stroke="#7f00e0" stroke-width="0.12">KCIO<tspan dx="-0.95" dy="1.05" style="font-size:14px;letter-spacing:-1.66px" stroke-width="0">-</tspan><tspan dx="0.95" dy="-1.05">LP</tspan></text>
<text class="m" x="407.18" y="230.90" fill="#7f00e0" stroke="#7f00e0" stroke-width="0.12">6</text>
<text class="m" x="515.02" y="230.90" fill="#7f00e0" stroke="#7f00e0" stroke-width="0.12"><tspan dx="-0.95" dy="1.05" style="font-size:14px;letter-spacing:-1.66px" stroke-width="0">-</tspan><tspan dx="0.95" dy="-1.05">39.6</tspan></text>
<text class="m" x="568.94" y="230.90" fill="#7f00e0" stroke="#7f00e0" stroke-width="0.12"><tspan dx="-0.95" dy="1.05" style="font-size:14px;letter-spacing:-1.66px" stroke-width="0">-</tspan><tspan dx="0.95" dy="-1.05">118.4</tspan></text>
<text class="m" x="622.86" y="230.90" fill="#7f00e0" stroke="#7f00e0" stroke-width="0.12">2Edge</text>
<text class="m" x="676.78" y="230.90" fill="#7f00e0" stroke="#7f00e0" stroke-width="0.12">33.1</text>
<text class="m" x="723.96" y="230.90" fill="#c8a01e" stroke="#c8a01e" stroke-width="0.12">63°</text>
<text class="m" x="757.66" y="230.90" fill="#c8a01e" stroke="#c8a01e" stroke-width="0.12">(50°)</text>
<rect x="346.6" y="237.9" width="7" height="10.6" fill="#c40000"/>
<text class="m" x="346.9" y="246.6" fill="#fff" style="letter-spacing:0">C</text>
<text class="v" x="360.7" y="248" font-size="11" letter-spacing="0.12" fill="#111">= Co-channel warning</text>
<rect x="557.6" y="237.9" width="6.8" height="10.6" fill="#ff7f7f"/>
<text class="m" x="558" y="246.6" fill="#fff" style="letter-spacing:0">a</text>
<text class="v" x="571.4" y="248" font-size="11" letter-spacing="0.12" fill="#111">= Adjacent channel warning</text>
<path d="M9 645.4 H172.5" stroke="#2a2a2a" stroke-width="0.85" stroke-dasharray="1 1.07" fill="none"/>
<path d="M216 645.4 H792" stroke="#2a2a2a" stroke-width="0.85" stroke-dasharray="1 1.07" fill="none"/>
<path d="M9 657.8 H172.5" stroke="#2a2a2a" stroke-width="0.85" stroke-dasharray="1 1.07" fill="none"/>
<path d="M216 657.8 H792" stroke="#2a2a2a" stroke-width="0.85" stroke-dasharray="1 1.07" fill="none"/>
<path d="M9 670.4 H172.5" stroke="#2a2a2a" stroke-width="0.85" stroke-dasharray="1 1.07" fill="none"/>
<path d="M216 670.4 H792" stroke="#2a2a2a" stroke-width="0.85" stroke-dasharray="1 1.07" fill="none"/>
<path d="M9 683.3 H172.5" stroke="#2a2a2a" stroke-width="0.85" stroke-dasharray="1 1.07" fill="none"/>
<path d="M216 683.3 H792" stroke="#2a2a2a" stroke-width="0.85" stroke-dasharray="1 1.07" fill="none"/>
<path d="M9 696.3 H172.5" stroke="#2a2a2a" stroke-width="0.85" stroke-dasharray="1 1.07" fill="none"/>
<path d="M216 696.3 H792" stroke="#2a2a2a" stroke-width="0.85" stroke-dasharray="1 1.07" fill="none"/>
<path d="M9 708.5 H172.5" stroke="#2a2a2a" stroke-width="0.85" stroke-dasharray="1 1.07" fill="none"/>
<path d="M216 708.5 H792" stroke="#2a2a2a" stroke-width="0.85" stroke-dasharray="1 1.07" fill="none"/>
<path d="M9 721.3 H172.5" stroke="#2a2a2a" stroke-width="0.85" stroke-dasharray="1 1.07" fill="none"/>
<path d="M216 721.3 H792" stroke="#2a2a2a" stroke-width="0.85" stroke-dasharray="1 1.07" fill="none"/>
<path d="M9 734.4 H172.5" stroke="#2a2a2a" stroke-width="0.85" stroke-dasharray="1 1.07" fill="none"/>
<path d="M216 734.4 H792" stroke="#2a2a2a" stroke-width="0.85" stroke-dasharray="1 1.07" fill="none"/>
<path d="M9 747.5 H172.5" stroke="#2a2a2a" stroke-width="0.85" stroke-dasharray="1 1.07" fill="none"/>
<path d="M216 747.5 H792" stroke="#2a2a2a" stroke-width="0.85" stroke-dasharray="1 1.07" fill="none"/>
<rect x="39.2" y="637" width="9.9" height="122" fill="#d9d9d9" fill-opacity="0.55"/>
<rect x="70" y="637" width="30.8" height="122" fill="#d9d9d9" fill-opacity="0.55"/>
<path d="M12.5 632.4 H8 V760.9" stroke="#111" stroke-width="1.8" fill="none"/>
<path d="M65 632.4 H110.8" stroke="#111" stroke-width="1.8" fill="none"/>
<path d="M162.9 632.4 H173.8 V760.9" stroke="#111" stroke-width="1.8" fill="none"/>
<path d="M214.6 760.9 V632.4 H482.3" stroke="#111" stroke-width="1.8" fill="none"/>
<path d="M524 632.4 H792.6 V760.9" stroke="#111" stroke-width="1.8" fill="none"/>
<text class="s" x="39.2" y="635.9" font-size="10.6" letter-spacing="0.15" font-weight="bold" text-anchor="middle" fill="#111">VHF Lo</text>
<text class="s" x="137.6" y="635.9" font-size="10.6" letter-spacing="0.15" font-weight="bold" text-anchor="middle" fill="#111">VHF Hi</text>
<text class="s" x="503.4" y="635.8" font-size="10.5" font-weight="bold" text-anchor="middle" fill="#111">UHF</text>
<text class="s" x="194" y="636" font-size="10.8" text-anchor="middle" fill="#111">dBm</text>
<text class="s" x="194" y="649.0" font-size="10.8" text-anchor="middle" fill="#111">-10</text>
<text class="s" x="194" y="661.4" font-size="10.8" text-anchor="middle" fill="#111">-20</text>
<text class="s" x="194" y="674.0" font-size="10.8" text-anchor="middle" fill="#111">-30</text>
<text class="s" x="194" y="686.9" font-size="10.8" text-anchor="middle" fill="#111">-40</text>
<text class="s" x="194" y="699.9" font-size="10.8" text-anchor="middle" fill="#111">-50</text>
<text class="s" x="194" y="712.1" font-size="10.8" text-anchor="middle" fill="#111">-60</text>
<text class="s" x="194" y="724.9" font-size="10.8" text-anchor="middle" fill="#111">-70</text>
<text class="s" x="194" y="738.0" font-size="10.8" text-anchor="middle" fill="#111">-80</text>
<text class="s" x="194" y="751.1" font-size="10.8" text-anchor="middle" fill="#111">-90</text>
<text class="s" x="194" y="762.1" font-size="9.3" text-anchor="middle" fill="#111">Channel</text>
<text class="v" x="13.0" y="762.3" font-size="7" text-anchor="middle" fill="#222">2</text>
<text class="v" x="34.3" y="762.3" font-size="7" text-anchor="middle" fill="#222">4</text>
<text class="v" x="55.3" y="762.3" font-size="7" text-anchor="middle" fill="#222">5</text>
<text class="v" x="65.0" y="762.3" font-size="7" text-anchor="middle" fill="#222">6</text>
<text class="v" x="106.4" y="762.3" font-size="7" text-anchor="middle" fill="#222">7</text>
<text class="v" x="126.9" y="762.3" font-size="7" text-anchor="middle" fill="#222">9</text>
<text class="v" x="147.9" y="762.3" font-size="7" text-anchor="middle" fill="#222">11</text>
<text class="v" x="168.3" y="762.3" font-size="7" text-anchor="middle" fill="#222">13</text>
<path d="M8.0 760 H9.8" stroke="#111" stroke-width="1.7"/>
<path d="M16.2 760 H31.1" stroke="#111" stroke-width="1.7"/>
<path d="M37.5 760 H52.1" stroke="#111" stroke-width="1.7"/>
<path d="M58.5 760 H61.8" stroke="#111" stroke-width="1.7"/>
<path d="M68.2 760 H103.2" stroke="#111" stroke-width="1.7"/>
<path d="M109.6 760 H123.7" stroke="#111" stroke-width="1.7"/>
<path d="M130.1 760 H142.5" stroke="#111" stroke-width="1.7"/>
<path d="M153.3 760 H162.9" stroke="#111" stroke-width="1.7"/>
<text class="v" x="220.0" y="762.3" font-size="7" text-anchor="middle" fill="#222">14</text>
<text class="v" x="240.6" y="762.3" font-size="7" text-anchor="middle" fill="#222">16</text>
<text class="v" x="271.6" y="762.3" font-size="7" text-anchor="middle" fill="#222">19</text>
<text class="v" x="302.5" y="762.3" font-size="7" text-anchor="middle" fill="#222">22</text>
<text class="v" x="333.4" y="762.3" font-size="7" text-anchor="middle" fill="#222">25</text>
<text class="v" x="364.3" y="762.3" font-size="7" text-anchor="middle" fill="#222">28</text>
<text class="v" x="395.3" y="762.3" font-size="7" text-anchor="middle" fill="#222">31</text>
<text class="v" x="426.2" y="762.3" font-size="7" text-anchor="middle" fill="#222">34</text>
<text class="v" x="457.1" y="762.3" font-size="7" text-anchor="middle" fill="#222">37</text>
<text class="v" x="488.1" y="762.3" font-size="7" text-anchor="middle" fill="#222">40</text>
<text class="v" x="519.0" y="762.3" font-size="7" text-anchor="middle" fill="#222">43</text>
<text class="v" x="549.9" y="762.3" font-size="7" text-anchor="middle" fill="#222">46</text>
<text class="v" x="580.9" y="762.3" font-size="7" text-anchor="middle" fill="#222">49</text>
<text class="v" x="611.8" y="762.3" font-size="7" text-anchor="middle" fill="#222">52</text>
<text class="v" x="642.7" y="762.3" font-size="7" text-anchor="middle" fill="#222">55</text>
<text class="v" x="673.6" y="762.3" font-size="7" text-anchor="middle" fill="#222">58</text>
<text class="v" x="704.6" y="762.3" font-size="7" text-anchor="middle" fill="#222">61</text>
<text class="v" x="735.5" y="762.3" font-size="7" text-anchor="middle" fill="#222">64</text>
<text class="v" x="766.4" y="762.3" font-size="7" text-anchor="middle" fill="#222">67</text>
<text class="v" x="787.1" y="762.3" font-size="7" text-anchor="middle" fill="#222">69</text>
<path d="M214.0 760 H214.6" stroke="#111" stroke-width="1.7"/>
<path d="M225.4 760 H235.2" stroke="#111" stroke-width="1.7"/>
<path d="M246.1 760 H266.1" stroke="#111" stroke-width="1.7"/>
<path d="M277.0 760 H297.0" stroke="#111" stroke-width="1.7"/>
<path d="M307.9 760 H328.0" stroke="#111" stroke-width="1.7"/>
<path d="M338.9 760 H358.9" stroke="#111" stroke-width="1.7"/>
<path d="M369.8 760 H389.8" stroke="#111" stroke-width="1.7"/>
<path d="M400.7 760 H420.8" stroke="#111" stroke-width="1.7"/>
<path d="M431.7 760 H451.7" stroke="#111" stroke-width="1.7"/>
<path d="M462.6 760 H482.6" stroke="#111" stroke-width="1.7"/>
<path d="M493.5 760 H513.5" stroke="#111" stroke-width="1.7"/>
<path d="M524.4 760 H544.5" stroke="#111" stroke-width="1.7"/>
<path d="M555.4 760 H575.4" stroke="#111" stroke-width="1.7"/>
<path d="M586.3 760 H606.3" stroke="#111" stroke-width="1.7"/>
<path d="M617.2 760 H637.3" stroke="#111" stroke-width="1.7"/>
<path d="M648.2 760 H668.2" stroke="#111" stroke-width="1.7"/>
<path d="M679.1 760 H699.1" stroke="#111" stroke-width="1.7"/>
<path d="M710.0 760 H730.0" stroke="#111" stroke-width="1.7"/>
<path d="M741.0 760 H761.0" stroke="#111" stroke-width="1.7"/>
<path d="M771.9 760 H781.6" stroke="#111" stroke-width="1.7"/>
<rect x="58.2" y="688.1" width="12.8" height="6.6" rx="3.3" fill="#ffff88"/>
<rect x="60" y="689.9" width="9" height="2.9" fill="#a860ec"/>
<rect x="58.2" y="703.3" width="12.8" height="6.6" rx="3.3" fill="#ffff88"/>
<rect x="60" y="705.1" width="9" height="2.9" fill="#a860ec"/>
<text class="m" transform="translate(68.2 686.6) rotate(-90)" style="font-size:9.2px;letter-spacing:-0.05px" fill="#a868e8" fill-opacity="1" stroke="#fff" stroke-width="2.4" stroke-opacity="0.8" paint-order="stroke" stroke-linejoin="round">KRPE-LP</text>
<text class="m" transform="translate(68.2 701.2) rotate(-90)" style="font-size:9.2px;letter-spacing:-0.05px" fill="#a868e8" fill-opacity="1" stroke="#fff" stroke-width="2.4" stroke-opacity="0.8" paint-order="stroke" stroke-linejoin="round">KSFV-CA</text>
<rect x="328" y="704.7" width="9.8" height="3.2" fill="#6a00c8"/>
<text class="m" transform="translate(336.2 700.6) rotate(-90)" style="font-size:9.2px;letter-spacing:-0.05px" fill="#8000e0" fill-opacity="1" stroke="#fff" stroke-width="2.4" stroke-opacity="0.8" paint-order="stroke" stroke-linejoin="round">KBLM-LP</text>
</svg></body></html>
